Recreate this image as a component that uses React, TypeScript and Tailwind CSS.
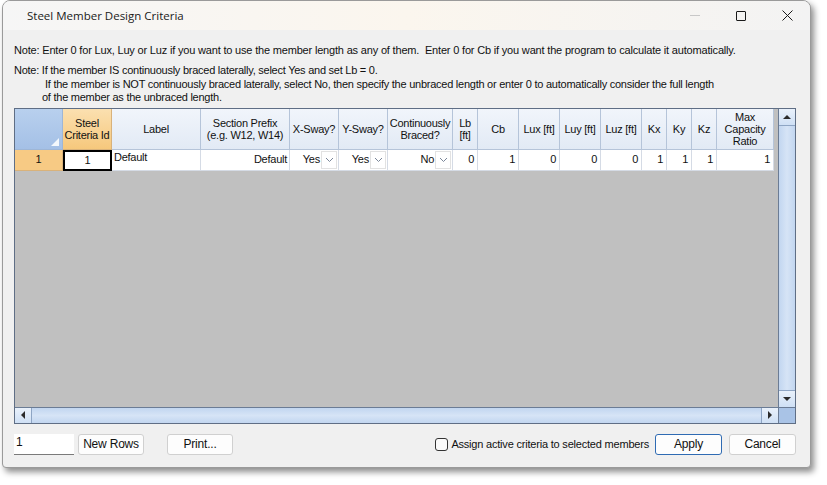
const cols = [
  { w: 49, label: ["Steel", "Criteria Id"], sel: true },
  { w: 89, label: ["Label"] },
  { w: 89, label: ["Section Prefix", "(e.g. W12, W14)"] },
  { w: 49, label: ["X-Sway?"] },
  { w: 49, label: ["Y-Sway?"] },
  { w: 65, label: ["Continuously", "Braced?"] },
  { w: 25, label: ["Lb", "[ft]"] },
  { w: 41, label: ["Cb"] },
  { w: 41, label: ["Lux [ft]"] },
  { w: 41, label: ["Luy [ft]"] },
  { w: 41, label: ["Luz [ft]"] },
  { w: 25, label: ["Kx"] },
  { w: 25, label: ["Ky"] },
  { w: 25, label: ["Kz"] },
  { w: 57, label: ["Max", "Capacity", "Ratio"] },
];

const Chevron = () => (
  <svg width="9" height="6" viewBox="0 0 9 6" className="text-[#7a8699]">
    <path d="M1 1 L4.5 4.5 L8 1" fill="none" stroke="currentColor" strokeWidth="1" />
  </svg>
);

const ComboCell = ({ w, value }: { w: number; value: string }) => (
  <div style={{ width: w }} className="h-full flex items-center justify-end border-r border-b border-[#d5dbe5] bg-white">
    <span className="pr-[1px]">{value}</span>
    <div className="w-[16px] h-[18px] mr-[1px] flex items-center justify-center bg-white border border-[#e2e2e2]">
      <Chevron />
    </div>
  </div>
);

const NumCell = ({ w, value }: { w: number; value: string }) => (
  <div style={{ width: w }} className="h-full flex items-center justify-end pr-[3px] border-r border-b border-[#d5dbe5] bg-white">
    {value}
  </div>
);

export default function App() {
  return (
    <div className="w-[827px] h-[485px] bg-white relative overflow-hidden" style={{ fontFamily: '"Liberation Sans", Arial, sans-serif' }}>
      <div className="ml-[2px] w-[809px] h-[468px] bg-[#f0f0f0] border border-[#9a9a9a] rounded-t-[8px] rounded-b-[4px] shadow-[3px_4px_6px_rgba(0,0,0,0.45)] flex flex-col overflow-hidden">
        {/* title bar */}
        <div className="h-[29px] flex items-center bg-gradient-to-r from-[#f6f6f6] via-[#fbf6ee] to-[#f3f3f3] shrink-0">
          <div className="pl-[24px] text-[11.5px] text-[#1a1a1a]" style={{ fontFamily: '"Open Sans", "Noto Sans", sans-serif' }}>
            Steel Member Design Criteria
          </div>
          <div className="ml-auto flex items-center h-full">
            <div className="w-[46px] h-full flex items-center justify-center">
              <div className="w-[10px] h-[1px] bg-[#c8c8c8]" />
            </div>
            <div className="w-[46px] h-full flex items-center justify-center">
              <div className="w-[10px] h-[10px] border border-[#1a1a1a] rounded-[1px]" />
            </div>
            <div className="w-[46px] h-full flex items-center justify-center">
              <svg width="11" height="11" viewBox="0 0 11 11">
                <path d="M0.5 0.5 L10.5 10.5 M10.5 0.5 L0.5 10.5" stroke="#1a1a1a" strokeWidth="1" />
              </svg>
            </div>
          </div>
        </div>

        <div className="flex-1 flex flex-col px-[11px] text-[11px] text-[#111] leading-[13px] tracking-[-0.25px]">
          <div className="mt-[14px] tracking-[-0.18px]">
            Note: Enter 0 for Lux, Luy or Luz if you want to use the member length as any of them.&nbsp; Enter 0 for Cb if you want the program to calculate it automatically.
          </div>
          <div className="mt-[7px] leading-[13.5px]">
            <div>Note: If the member IS continuously braced laterally, select Yes and set Lb = 0.</div>
            <div className="pl-[31px]">If the member is NOT continuously braced laterally, select No, then specify the unbraced length or enter 0 to automatically consider the full length</div>
            <div className="pl-[28px]">of the member as the unbraced length.</div>
          </div>

          {/* grid */}
          <div className="mt-[3px] w-[782px] h-[316px] border border-[#5f6e85] grid grid-cols-[1fr_17px] grid-rows-[1fr_16px] bg-[#c0c0c0]">
            <div className="flex flex-col overflow-hidden">
              {/* header row */}
              <div className="flex h-[41px]">
                <div className="w-[48px] h-full bg-gradient-to-b from-[#b8d0ee] to-[#a4c0e6] border-r border-b border-[#9eb6d6] relative">
                  <div className="absolute right-[3px] bottom-[3px] w-0 h-0 border-l-[8px] border-l-transparent border-b-[8px] border-b-[#f4f8fc]" />
                </div>
                {cols.map((c, i) => (
                  <div
                    key={i}
                    style={{ width: c.w }}
                    className={
                      "h-full flex flex-col items-center justify-center text-center border-r border-b leading-[12px] " +
                      (c.sel
                        ? "bg-gradient-to-b from-[#fbe0b0] to-[#f6c87c] border-[#d9b27a]"
                        : "bg-gradient-to-b from-[#f1f5fb] to-[#e2eaf5] border-[#b5c4d9]")
                    }
                  >
                    {c.label.map((l, j) => (
                      <div key={j} className="whitespace-nowrap">{l}</div>
                    ))}
                  </div>
                ))}
              </div>
              {/* data row */}
              <div className="flex h-[21px]">
                <div className="w-[48px] h-full flex items-center justify-center bg-[#f7ca84] border-r border-b border-[#d9b27a]">1</div>
                <div className="w-[49px] h-full flex items-center justify-center bg-white border-2 border-black">1</div>
                <div className="w-[89px] h-full pl-[2px] pt-[1px] bg-white border-r border-b border-[#d5dbe5]">Default</div>
                <div className="w-[89px] h-full flex items-center justify-end pr-[2px] bg-white border-r border-b border-[#d5dbe5]">Default</div>
                <ComboCell w={49} value="Yes" />
                <ComboCell w={49} value="Yes" />
                <ComboCell w={65} value="No" />
                <NumCell w={25} value="0" />
                <NumCell w={41} value="1" />
                <NumCell w={41} value="0" />
                <NumCell w={41} value="0" />
                <NumCell w={41} value="0" />
                <NumCell w={25} value="1" />
                <NumCell w={25} value="1" />
                <NumCell w={25} value="1" />
                <NumCell w={57} value="1" />
              </div>
            </div>

            {/* vertical scrollbar */}
            <div className="flex flex-col bg-[#c9dbf2] border-l border-[#6b7c95]">
              <div className="h-[17px] flex items-center justify-center bg-gradient-to-b from-[#e9f1fb] to-[#cfe0f5] border-b border-[#8ea5c4]">
                <div className="w-0 h-0 border-l-[4px] border-r-[4px] border-b-[4px] border-l-transparent border-r-transparent border-b-[#2b2b2b]" />
              </div>
              <div className="flex-1 bg-gradient-to-r from-[#c2d6f0] via-[#d6e4f6] to-[#c2d6f0]" />
              <div className="h-[17px] flex items-center justify-center bg-gradient-to-b from-[#e9f1fb] to-[#cfe0f5] border-t border-[#8ea5c4]">
                <div className="w-0 h-0 border-l-[4px] border-r-[4px] border-t-[4px] border-l-transparent border-r-transparent border-t-[#2b2b2b]" />
              </div>
            </div>

            {/* horizontal scrollbar */}
            <div className="flex bg-[#c9dbf2] border-t border-[#6b7c95]">
              <div className="w-[17px] flex items-center justify-center bg-gradient-to-b from-[#e9f1fb] to-[#cfe0f5] border-r border-[#8ea5c4]">
                <div className="w-0 h-0 border-t-[4px] border-b-[4px] border-r-[4px] border-t-transparent border-b-transparent border-r-[#2b2b2b]" />
              </div>
              <div className="flex-1 bg-gradient-to-b from-[#c2d6f0] via-[#d6e4f6] to-[#c2d6f0]" />
              <div className="w-[17px] flex items-center justify-center bg-gradient-to-b from-[#e9f1fb] to-[#cfe0f5] border-l border-[#8ea5c4]">
                <div className="w-0 h-0 border-t-[4px] border-b-[4px] border-l-[4px] border-t-transparent border-b-transparent border-l-[#2b2b2b]" />
              </div>
            </div>
            <div className="bg-[#a9c3e6] border-t border-l border-[#6b7c95]" />
          </div>

          {/* bottom bar */}
          <div className="mt-[10px] w-[782px] flex items-center h-[21px] text-[12px] tracking-[-0.2px]">
            <div className="w-[60px] h-[21px] bg-white border-b border-[#7a7a7a] pl-[2px] leading-[16px]">1</div>
            <button className="ml-[4px] w-[66px] h-[21px] bg-[#fdfdfd] border border-[#d0d0d0] rounded-[3px]">New Rows</button>
            <button className="ml-[23px] w-[66px] h-[21px] bg-[#fdfdfd] border border-[#d0d0d0] rounded-[3px]">Print...</button>
            <div className="ml-auto flex items-center">
              <div className="w-[13px] h-[13px] border border-[#333] rounded-[3px] bg-[#fafafa]" />
              <span className="ml-[3px] text-[11px]">Assign active criteria to selected members</span>
            </div>
            <button className="ml-[6px] w-[67px] h-[21px] bg-[#fdfdfd] border border-[#2f6bb3] rounded-[3px]">Apply</button>
            <button className="ml-[7px] w-[67px] h-[21px] bg-[#fdfdfd] border border-[#d0d0d0] rounded-[3px]">Cancel</button>
          </div>
        </div>
      </div>
    </div>
  );
}
